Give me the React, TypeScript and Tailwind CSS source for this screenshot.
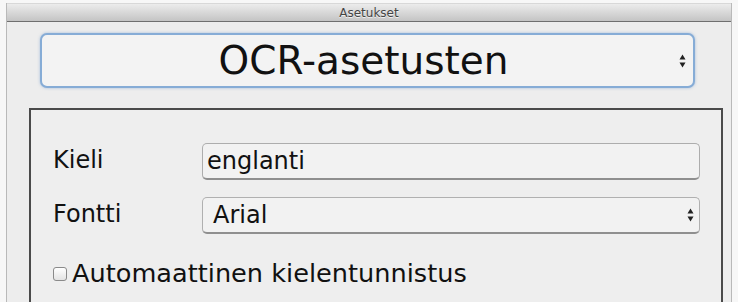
import React from 'react';

const font = { fontFamily: '"DejaVu Sans", "Noto Sans", sans-serif' };

function Arrows() {
    return (
        <svg width="7" height="14" viewBox="0 0 7 14" className="shrink-0">
            <path d="M3.5 0.5 L6.5 5.5 L0.5 5.5 Z" fill="#222" />
            <path d="M3.5 13.5 L6.5 8.5 L0.5 8.5 Z" fill="#222" />
        </svg>
    );
}

function FieldRow({ label, children }: { label: string; children: React.ReactNode }) {
    return (
        <div className="flex items-center">
            <div className="w-[149px] shrink-0 text-[24px] text-[#111] -mt-[3px]">{label}</div>
            {children}
        </div>
    );
}

export default function App() {
    return (
        <div
            className="w-[738px] h-[302px] overflow-hidden bg-[#f7f7f7] pt-[3px] pl-[6px] pr-[6px]"
            style={font}
        >
            <div className="h-[320px] border-x border-[#b9b9b9] bg-[#ededed] flex flex-col">
                <div className="h-[19px] shrink-0 flex items-center justify-center bg-gradient-to-b from-[#ececec] to-[#c4c4c4] border-b border-[#6f6f6f] border-t border-t-[#d8d8d8]">
                    <span
                        className="text-[12px] text-[#454545] leading-none"
                        style={{ textShadow: '0 1px 0 rgba(255,255,255,0.7)' }}
                    >
                        Asetukset
                    </span>
                </div>

                <div className="ml-[33px] mt-[11px] w-[655px] h-[55px] shrink-0 rounded-[7px] border-2 border-[#86acd6] bg-[#f3f3f3] shadow-[0_0_3px_rgba(90,140,200,0.5)] flex items-center pr-[7px]">
                    <div className="flex-1 text-center text-[39px] text-[#111] pl-[6px] mt-[2px]">
                        OCR-asetusten
                    </div>
                    <Arrows />
                </div>

                <div className="ml-[22px] mt-[20px] w-[694px] flex-1 border-2 border-[#4a4a4a] bg-[#eeeeee] pt-[33px] pl-[22px] pr-[21px] flex flex-col">
                    <FieldRow label="Kieli">
                        <div className="flex-1 h-[37px] rounded-[5px] border border-[#adadad] border-b-2 border-b-[#8f8f8f] bg-[#f2f2f2] flex items-center pl-[4px] text-[24px] text-[#111]">
                            englanti
                        </div>
                    </FieldRow>
                    <div className="mt-[17px]">
                        <FieldRow label="Fontti">
                            <div className="flex-1 h-[37px] rounded-[5px] border border-[#b0b0b0] border-b-2 border-b-[#8f8f8f] bg-[#f2f2f2] flex items-center pl-[10px] pr-[5px] text-[24px] text-[#111]">
                                <span className="flex-1">Arial</span>
                                <Arrows />
                            </div>
                        </FieldRow>
                    </div>
                    <div className="mt-[22px] flex items-center">
                        <div className="w-[14px] h-[14px] rounded-[3px] border border-[#8a8a8a] bg-gradient-to-b from-[#ffffff] to-[#e3e3e3] shrink-0" />
                        <span className="ml-[5px] text-[25.6px] text-[#111] -mt-[2px]">
                            Automaattinen kielentunnistus
                        </span>
                    </div>
                </div>
            </div>
        </div>
    );
}
